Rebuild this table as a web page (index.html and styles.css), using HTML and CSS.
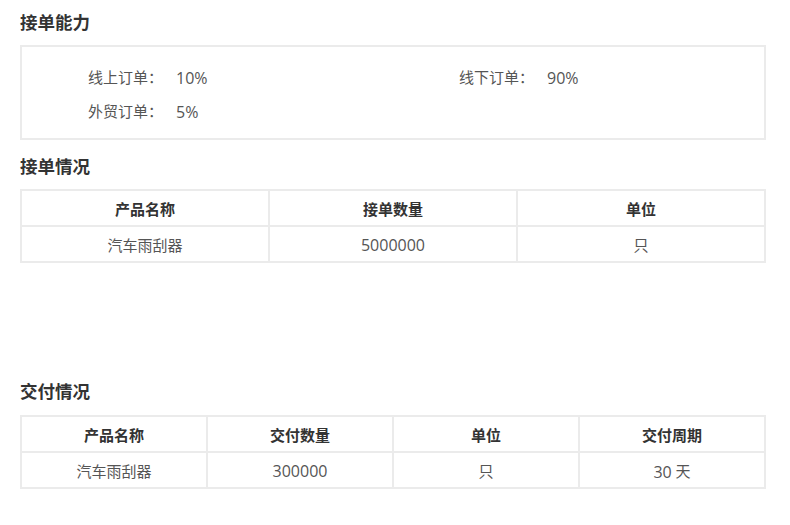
FILE: index.html
```html
<!DOCTYPE html>
<html lang="zh-CN">
<head>
<meta charset="utf-8">
<link rel="stylesheet" href="styles.css">
</head>
<body>
<div class="page">
  <section class="sec sec-ability">
    <h2 class="title">接单能力</h2>
    <div class="box">
      <div class="item"><span class="label">线上订单：</span><span class="val num">10%</span></div>
      <div class="item"><span class="label">线下订单：</span><span class="val num">90%</span></div>
      <div class="item"><span class="label">外贸订单：</span><span class="val num">5%</span></div>
    </div>
  </section>
  <section class="sec sec-orders">
    <h2 class="title">接单情况</h2>
    <table class="tbl">
      <thead><tr><th>产品名称</th><th>接单数量</th><th>单位</th></tr></thead>
      <tbody><tr><td>汽车雨刮器</td><td><span class="num">5000000</span></td><td>只</td></tr></tbody>
    </table>
  </section>
  <section class="sec sec-delivery">
    <h2 class="title">交付情况</h2>
    <table class="tbl">
      <thead><tr><th>产品名称</th><th>交付数量</th><th>单位</th><th>交付周期</th></tr></thead>
      <tbody><tr><td>汽车雨刮器</td><td><span class="num">300000</span></td><td>只</td><td><span class="num">30</span> 天</td></tr></tbody>
    </table>
  </section>
</div>
</body>
</html>
```
FILE: styles.css
```css
* { box-sizing: border-box; }
html, body { margin: 0; padding: 0; background: #fff; }
body {
  font-family: "Open Sans", "Noto Sans CJK SC", sans-serif;
  color: #555;
  font-size: 15px;
}
.page {
  width: 790px;
  padding: 10px 24px 0 20px;
}
.title {
  margin: 0 0 11px 0;
  font-size: 17.5px;
  line-height: 24px;
  font-weight: bold;
  color: #333;
}
.sec-orders { margin-top: 14px; }
.sec-delivery { margin-top: 116px; }
.sec-delivery .title { margin-bottom: 12px; }
.box {
  border: 2px solid #ebebeb;
  display: grid;
  grid-template-columns: 1fr 1fr;
  padding: 13px 0 10px 0;
}
.item {
  line-height: 34px;
  padding-left: 66px;
}
.val { margin-left: 13px; }
.num { font-size: 16px; line-height: 1; vertical-align: -1px; }
.tbl {
  width: 100%;
  border-collapse: collapse;
  table-layout: fixed;
}
.tbl th, .tbl td {
  border: 2px solid #ebebeb;
  text-align: center;
  height: 36px;
  padding: 0;
  font-size: 15px;
}
.tbl th { color: #333; font-weight: bold; }
.tbl td { color: #555; }
```
